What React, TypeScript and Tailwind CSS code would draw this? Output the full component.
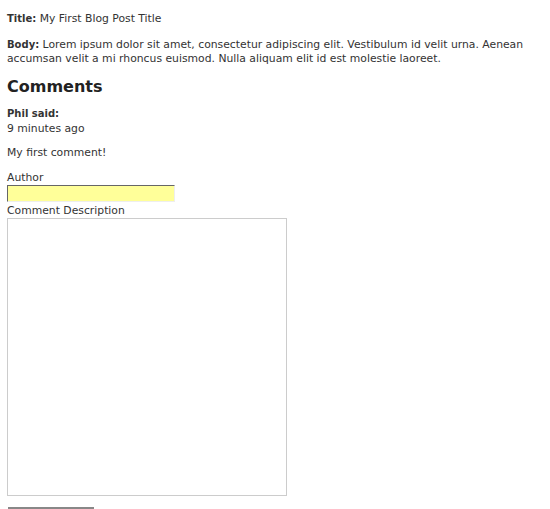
export default function App() {
  return (
    <div className="min-h-[509px] bg-white px-[7px] pt-[12px] text-[10.8px] leading-[14px] text-[#333] [font-family:'DejaVu_Sans',Verdana,sans-serif]">
      <p>
        <b className="text-[10px] leading-none">Title:</b> My First Blog Post Title
      </p>
      <p className="mt-[12px]">
        <b className="text-[10px] leading-none">Body:</b> Lorem ipsum dolor sit amet, consectetur adipiscing elit. Vestibulum id velit urna. Aenean
        accumsan velit a mi rhoncus euismod. Nulla aliquam elit id est molestie laoreet.
      </p>
      <h2 className="mt-[10px] text-[16px] font-bold leading-[22px] text-[#222]">Comments</h2>
      <div className="mt-[9px]">
        <p className="text-[10px] font-bold">Phil said:</p>
        <p className="mt-[1px]">9 minutes ago</p>
        <p className="mt-[10px]">My first comment!</p>
      </div>
      <form className="mt-[11px] flex flex-col items-start">
        <label htmlFor="author">Author</label>
        <input
          id="author"
          className="h-[17px] w-[168px] border border-t-[#666] border-l-[#666] border-b-[#eee] border-r-[#eee] bg-[#ffff99] outline-none"
        />
        <label htmlFor="desc" className="mt-[2px]">
          Comment Description
        </label>
        <textarea
          id="desc"
          className="mt-0 h-[278px] w-[280px] resize-none border border-[#ccc] bg-white outline-none"
        />
        <button
          type="button"
          className="mt-[11px] ml-[1px] h-[20px] w-[86px] border-t-2 border-[#888] bg-white"
        />
      </form>
    </div>
  );
}
